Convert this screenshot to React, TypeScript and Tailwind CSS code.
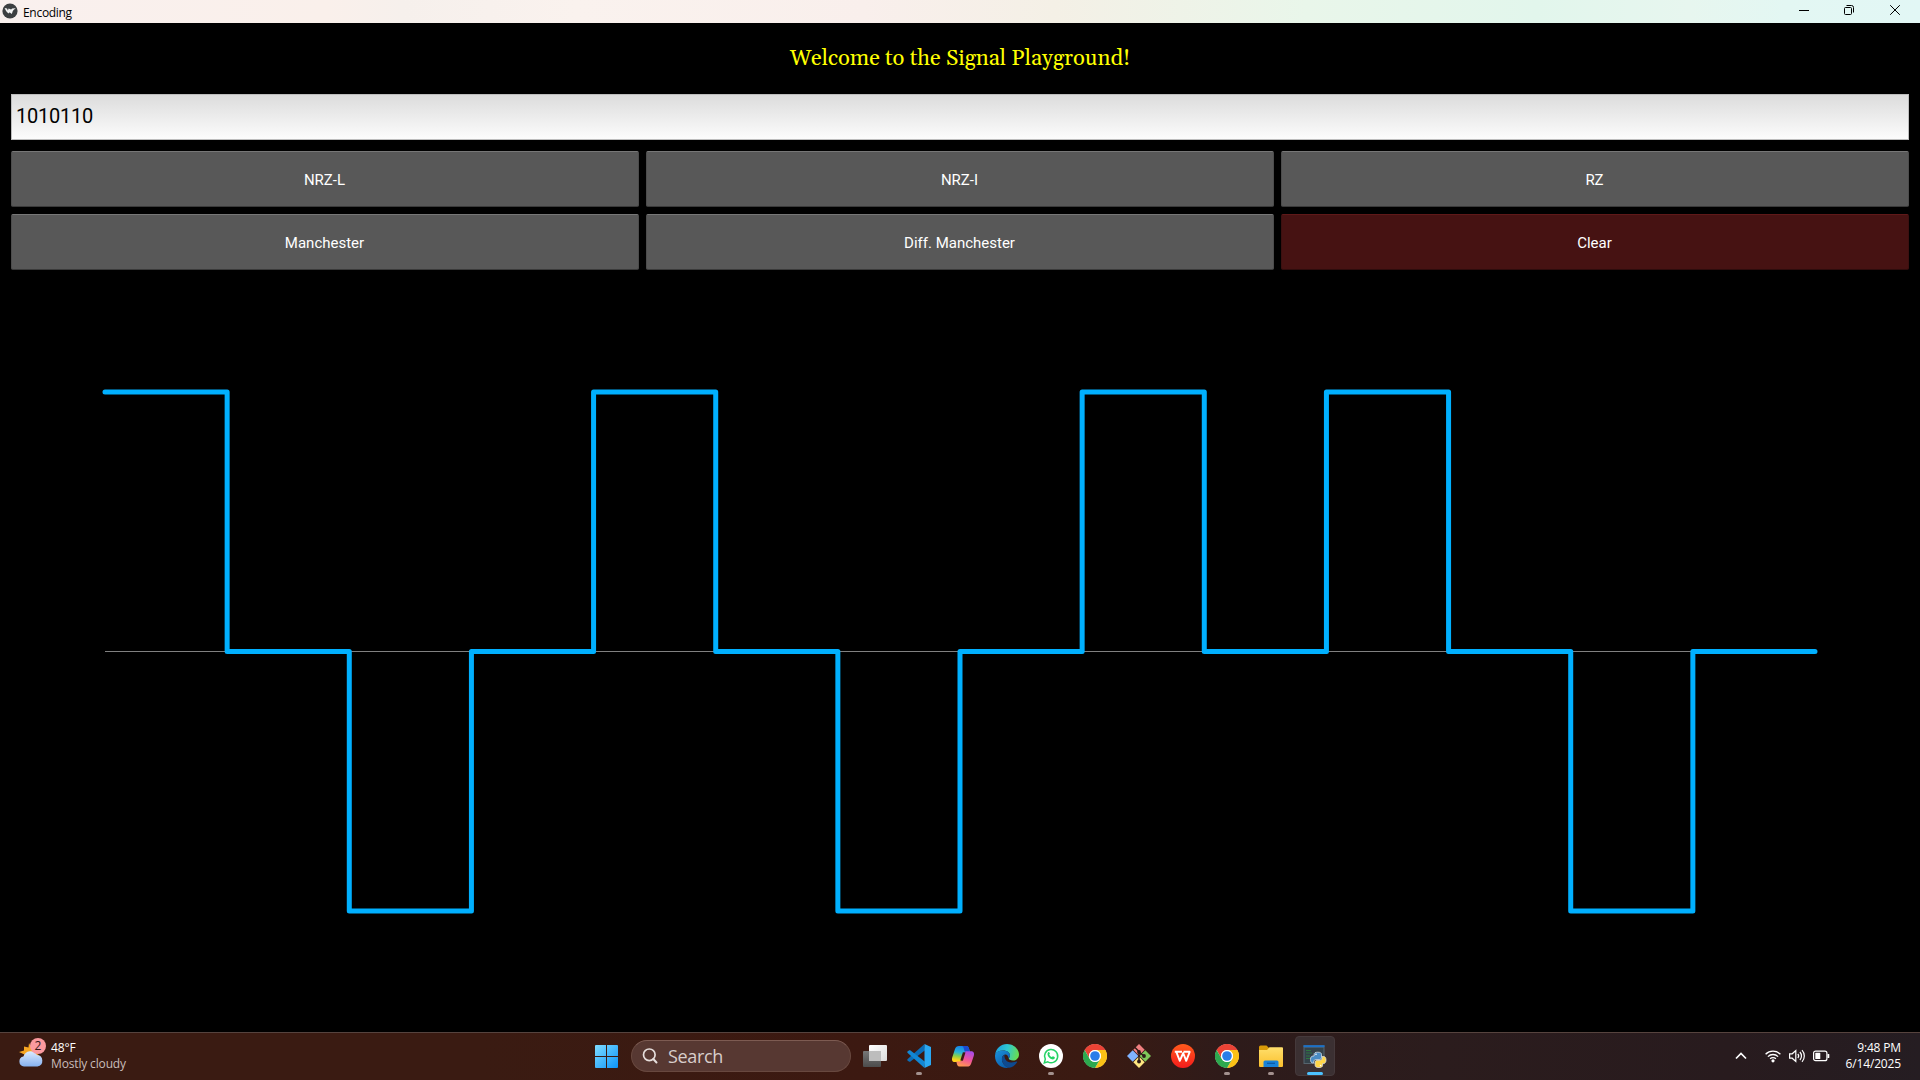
import type { ReactNode } from 'react';

/* ---------- Title bar ---------- */

function TitleBar() {
  return (
    <header className="flex h-[23px] shrink-0 items-center bg-[linear-gradient(90deg,#f9f0ee_0%,#faf0eb_17%,#f6f0ec_21%,#faf2ee_30%,#f9efec_45%,#f4f0e6_55%,#e9f6ea_68%,#e2f6ec_80%,#e7f6ef_88%,#e3f7f3_93%,#e2f7f5_100%)] pl-[2px] text-black">
      <svg width="16" height="16" viewBox="0 0 16 16" className="-mt-px">
        <circle cx="8" cy="8" r="7.6" fill="#3c3f41" />
        <path d="M2.600 5 5 5.600l.9 2 .7-2.200 2.500 1 1-.8 3.700-.3-2 1.400-1 1.200-1 3.200-2.300-1.800-.6 1.100-1.900-1.200-1.300-1.900z" fill="#f4f4f4" />
      </svg>
      <span className="ml-[5px] mt-[2px] font-['Segoe_UI','Open_Sans',sans-serif] text-[12px] leading-4 tracking-[-0.3px]">Encoding</span>
      <div className="ml-auto -mt-[3px] flex items-center pr-[20px]">
        <svg width="10" height="10" viewBox="0 0 10 10" className="mr-[35px]">
          <path d="M0 5.5h10" stroke="#000" />
        </svg>
        <svg width="10" height="10" viewBox="0 0 10 10" className="mr-[36px]" fill="none" stroke="#000">
          <rect x=".5" y="2.5" width="7" height="7" rx="1" />
          <path d="M2.5.5h5a2 2 0 0 1 2 2v5" />
        </svg>
        <svg width="10" height="10" viewBox="0 0 10 10" stroke="#000">
          <path d="M.2.2l9.6 9.6M9.8.2L.2 9.8" />
        </svg>
      </div>
    </header>
  );
}

/* ---------- Encoder controls ---------- */

const encodings = ['NRZ-L', 'NRZ-I', 'RZ', 'Manchester', 'Diff. Manchester'];

function Controls() {
  return (
    <div className="grid grid-cols-3 gap-[7px] font-[Roboto,sans-serif] text-[15px] text-white">
      {encodings.map((name) => (
        <button
          key={name}
          className="h-[56px] rounded-[2px] border border-t-[#777] border-r-[#4c4c4c] border-b-[#3a3a3a] border-l-[#4c4c4c] bg-[#585858] pt-[2px] pr-px"
        >
          {name}
        </button>
      ))}
      <button className="h-[56px] rounded-[2px] border border-t-[#5f1919] border-r-[#3c1010] border-b-[#2e0c0c] border-l-[#3c1010] bg-[#461212] pt-[2px] pr-px">
        Clear
      </button>
    </div>
  );
}

/* ---------- Signal plot ---------- */

const levels = [1, 0, -1, 0, 1, 0, -1, 0, 1, 0, 1, 0, -1, 0];

function SignalPlot() {
  const x0 = 105;
  const step = 1710 / levels.length;
  const mid = 381.5;
  const points = levels
    .flatMap((v, i) => {
      const y = mid - v * 259.5;
      return [`${x0 + i * step},${y}`, `${x0 + (i + 1) * step},${y}`];
    })
    .join(' ');
  return (
    <svg className="block w-full flex-1" viewBox="0 0 1920 762" fill="none">
      <path d="M105 381.5H1815" stroke="#808080" />
      <polyline points={points} stroke="#00b0ff" strokeWidth="5" strokeLinecap="round" strokeLinejoin="round" />
    </svg>
  );
}

/* ---------- Taskbar icons ---------- */

function StartIcon() {
  return (
    <svg width="23" height="23" viewBox="0 0 23 23">
      <defs>
        <linearGradient id="win" x1="0" y1="0" x2="1" y2="1">
          <stop offset="0" stopColor="#7fdcff" />
          <stop offset="1" stopColor="#0c93f8" />
        </linearGradient>
      </defs>
      <path d="M1 0h10v11H0V1q0-1 1-1zM12 0h10q1 0 1 1v10H12zM0 12h11v11H1q-1 0-1-1zM12 12h11v10q0 1-1 1H12z" fill="url(#win)" />
    </svg>
  );
}

function TaskViewIcon() {
  return (
    <svg width="24" height="24" viewBox="0 0 24 24">
      <defs>
        <linearGradient id="tvf" x1="0" y1="0" x2="1" y2="1">
          <stop offset="0" stopColor="#fff" />
          <stop offset="1" stopColor="#dcdcdc" />
        </linearGradient>
        <linearGradient id="tvb" x1="0" y1="0" x2="0" y2="1">
          <stop offset="0" stopColor="#777" />
          <stop offset="1" stopColor="#4c4c4c" />
        </linearGradient>
      </defs>
      <rect x="0" y="7" width="18" height="16" rx="1" fill="url(#tvb)" />
      <rect x="6" y="1" width="18" height="16" rx="1" fill="url(#tvf)" />
      <path d="M6 7h12v10H6z" fill="#bdbdbd" />
    </svg>
  );
}

function VSCodeIcon() {
  return (
    <svg width="24" height="24" viewBox="0 0 24 24">
      <path d="M.4 15.200 17.200.2l.8 6.100L3.200 17.800l-.9-.1L.4 16.400z" fill="#0a6db8" />
      <path d="M.4 8.800 17.200 23.800l.8-6.100L3.200 6.200l-.9.1L.4 7.600z" fill="#1287d4" />
      <path d="M17.500 0 24 3v18l-6.500 3z" fill="#2aa8f2" />
    </svg>
  );
}

function CopilotIcon() {
  return (
    <svg width="24" height="24" viewBox="0 0 24 24">
      <defs>
        <linearGradient id="cpa" x1=".5" y1="0" x2=".3" y2="1">
          <stop offset="0" stopColor="#1580e8" />
          <stop offset=".4" stopColor="#28b4d8" />
          <stop offset=".65" stopColor="#8bd04a" />
          <stop offset=".9" stopColor="#ffd21a" />
        </linearGradient>
        <linearGradient id="cpb" x1=".7" y1="0" x2=".3" y2="1">
          <stop offset="0" stopColor="#a74be8" />
          <stop offset=".5" stopColor="#f0539a" />
          <stop offset="1" stopColor="#ff9a4d" />
        </linearGradient>
      </defs>
      <path d="M8 2h7.200c1.500 0 2.300.8 2.700 2.200L19 8h-3.500c-1.700 0-2.400.8-2.800 2.200l-1.900 6.100C10.300 18 9.500 18 8 18H3.500C1 18 .6 15.500 1.300 13.200L4 5c.7-2 1.900-3 4-3z" fill="url(#cpa)" />
      <path d="M12 2h3.200c1.500 0 2.300.8 2.700 2.200L19 8h-3.500c-1.300 0-2-.8-2.300-2.100L12.600 3.800C12.400 3 12 2.300 11 2z" fill="#1b49d0" />
      <path d="M16 22.500H9c-1.700 0-2.600-.8-3-2.300L5.300 17.500H8.500c1.700 0 2.500-.8 2.900-2.300l1.800-6c.5-1.600 1.200-2 2.700-2h4.400c2.500 0 3.200 2.200 2.500 4.500l-2.700 8c-.7 2-2 2.800-4.100 2.800z" fill="url(#cpb)" />
      <path d="m9.300 16.500 2.600-8.300 2.600.3-2.600 8.300z" fill="#3a1a14" />
    </svg>
  );
}

function EdgeIcon() {
  return (
    <svg width="24" height="24" viewBox="0 0 24 24">
      <defs>
        <linearGradient id="edt" x1="0" y1=".3" x2="1" y2=".5">
          <stop offset="0" stopColor="#1ba0e0" />
          <stop offset=".5" stopColor="#2fc8d0" />
          <stop offset="1" stopColor="#6ade4e" />
        </linearGradient>
        <linearGradient id="edb" x1="0" y1="0" x2=".7" y2="1">
          <stop offset="0" stopColor="#1b92dc" />
          <stop offset="1" stopColor="#0b5cab" />
        </linearGradient>
      </defs>
      <path d="M.2 10.400C1 4.500 5.800 0 12 0c7 0 12 5.300 12 10.500 0 3.700-2.800 6-6 6-2.600 0-4.200-.9-4.200-1.900 0-.8 1.200-1.200 1.200-3.300C15 8.700 12 6.400 8.300 6.400 4.500 6.400 1.500 8 .2 10.400z" fill="url(#edt)" />
      <path d="M0 12C0 8.500 3.200 6.400 8.300 6.400c4 0 6.700 2.300 6.700 4.900 0 2.100-1.200 2.500-1.200 3.300 0 0-1-5-4.300-3.800-2.200.8-3.300 3.700-2 7.200 1 2.800 3.600 5.200 6.500 5.800C6 25 0 19.500 0 12z" fill="url(#edb)" />
      <path d="M7.500 18c-1.300-3.500-.2-6.400 2-7.200-.6 3.200 1.700 7.800 6.700 7.800 2.800 0 4.500-1 5.500-1 .5 0 .6.500.2 1C20 21.800 16.600 24 14 23.800 11.200 23.500 8.500 20.800 7.500 18z" fill="#0e4a90" />
    </svg>
  );
}

function WhatsAppIcon() {
  return (
    <svg width="24" height="24" viewBox="0 0 24 24">
      <circle cx="12" cy="12" r="12" fill="#fff" />
      <path d="m5.300 18.900 1-3.700a6.600 6.600 0 1 1 2.500 2.600z" fill="none" stroke="#25d366" strokeWidth="1.500" />
      <path d="M9.300 8.100c.5-.4.9-.2 1.100.3l.5 1.200c.1.400-.5.800-.6 1.100.6 1.200 1.500 1.900 2.600 2.400.4-.1.700-.9 1.100-.8l1.600.7c.5.300.1 1.700-.5 2.100-1.200.8-3.200.1-4.800-1.300-1.600-1.500-2.600-3.900-1-5.700z" fill="#25d366" />
    </svg>
  );
}

function ChromeIcon() {
  return (
    <svg width="24" height="24" viewBox="0 0 24 24">
      <circle cx="12" cy="12" r="11.800" fill="#fff" />
      <path d="M1.600 6A12 12 0 0 1 22.400 6H12a6 6 0 0 0-5.200 9z" fill="#ea4335" />
      <path d="M22.400 6A12 12 0 0 1 12 24l5.200-9A6 6 0 0 0 12 6z" fill="#fbc116" />
      <path d="M12 24A12 12 0 0 1 1.600 6l5.200 9a6 6 0 0 0 10.400 0z" fill="#2da94f" />
      <circle cx="12" cy="12" r="6" fill="#fff" />
      <circle cx="12" cy="12" r="4.800" fill="#2a7de9" />
    </svg>
  );
}

function GitIcon() {
  return (
    <svg width="24" height="24" viewBox="0 0 24 24">
      <path d="m12 0 5.700 5.700L12 11.400 6.300 5.700z" fill="#f08080" />
      <path d="m5.700 6.300 5.700 5.700-5.700 5.700L0 12z" fill="#80b3ff" />
      <path d="m18.300 6.300L24 12l-5.700 5.700-5.700-5.700z" fill="#7fc75a" />
      <path d="m12 12.600 5.700 5.700L12 24l-5.700-5.700z" fill="#ffe680" />
      <path d="M8 3.500 12 7.500V18M12 8l5 4" fill="none" stroke="#2b1917" strokeWidth="1.500" />
      <circle cx="12" cy="8" r="1.900" fill="#2b1917" />
      <circle cx="12" cy="17.500" r="1.900" fill="#2b1917" />
      <circle cx="17" cy="12" r="1.900" fill="#2b1917" />
    </svg>
  );
}

function WpsIcon() {
  return (
    <svg width="24" height="24" viewBox="0 0 24 24">
      <defs>
        <linearGradient id="wps" x1="0" y1="0" x2="0" y2="1">
          <stop offset="0" stopColor="#ff5a1c" />
          <stop offset="1" stopColor="#f51c1c" />
        </linearGradient>
      </defs>
      <circle cx="12" cy="12" r="12" fill="url(#wps)" />
      <path d="M3.800 7.800H11M5.300 7.800l3.500 9 3.400-7.800 3 7.800 3.500-9H12.500" fill="none" stroke="#fff" strokeWidth="1.900" strokeLinejoin="round" />
    </svg>
  );
}

function ExplorerIcon() {
  return (
    <svg width="24" height="24" viewBox="0 0 24 24">
      <defs>
        <linearGradient id="fld" x1="0" y1="0" x2="0" y2="1">
          <stop offset="0" stopColor="#ffdf6c" />
          <stop offset="1" stopColor="#fbc02d" />
        </linearGradient>
      </defs>
      <path d="M0 3q0-1.500 1.500-1.500h6L10 4v4H0z" fill="#d99a08" />
      <path d="M0 6h8l2.500-2.700H23q1 0 1 1V22q0 1-1 1H1q-1 0-1-1z" fill="url(#fld)" />
      <path d="M4.500 23v-5q0-1.500 1.500-1.500h12q1.500 0 1.500 1.500v5z" fill="#1882d8" />
      <path d="M8 19.300h8" stroke="#0b58a4" strokeWidth="1.200" />
    </svg>
  );
}

function PythonIcon() {
  return (
    <svg width="24" height="24" viewBox="0 0 24 24">
      <path d="M.5 1.200h21V20H.5z" fill="#56646e" />
      <path d="M.5 1.200h21v2H.5z" fill="#1a70c8" />
      <path d="M1.500 3.700h19V19h-19z" fill="#34424a" />
      <path d="M3 6.500h5M3 9h6M3 12h4M3 14.500h5" stroke="#2f7540" strokeWidth="1.200" />
      <g stroke="#e9eef2" strokeWidth=".7">
        <path d="M14.800 8.200c2.500 0 3.700.8 3.700 2.200v3c0 1.400-1 2.200-2.300 2.200H13c-1.500 0-2.300.9-2.300 2.300V19H9.600c-1.500 0-2.100-1.600-2.100-3.600s.8-3.400 2.600-3.400h1v-1.600c0-1.500 1.200-2.200 3.700-2.200z" fill="#4a8cc4" />
        <path d="M16 23.600c-2.500 0-3.900-.8-3.900-2.300v-2.800c0-1.300.9-2.200 2.300-2.200h2.400c1.600 0 2.400-1 2.400-2.400v-1.400h1.500c1.500 0 2.300 1.500 2.300 3.600 0 2-.9 3.500-2.500 3.500h-.9v1.700c0 1.500-1.200 2.300-3.600 2.300z" fill="#ffd648" />
      </g>
      <circle cx="13" cy="10.300" r=".8" fill="#fff" />
      <circle cx="17.600" cy="21.500" r=".8" fill="#fff" />
    </svg>
  );
}

/* ---------- Taskbar ---------- */

function Slot({ children, running, active }: { children: ReactNode; running?: boolean; active?: boolean }) {
  return (
    <div className="flex h-full w-[44px] shrink-0 items-center justify-center">
      <div
        className={
          active
            ? 'relative flex h-[40px] w-[40px] items-center justify-center rounded-[4px] border border-[#45393b] bg-[#3b3032]'
            : 'relative flex h-[40px] w-[40px] items-center justify-center'
        }
      >
        {children}
        {running && <span className="absolute bottom-px left-[17px] h-[3px] w-[6px] rounded-full bg-[#a3918e]" />}
        {active && <span className="absolute bottom-0 left-[11px] h-[3px] w-[16px] rounded-full bg-[#4cc2ff]" />}
      </div>
    </div>
  );
}

function Taskbar() {
  return (
    <footer className="flex h-[48px] shrink-0 items-center border-t border-[#56433e] bg-[linear-gradient(90deg,#3a1b12_0%,#3a1b12_25%,#3c1911_45%,#3a1a12_57%,#2e1b1a_64%,#2b1c1d_75%,#281b1e_90%,#251d22_100%)] pb-px font-['Segoe_UI','Open_Sans',sans-serif]">
      <div className="flex w-[584px] items-center pl-[18px]">
        <div className="relative -mt-[4px] h-[32px] w-[28px]">
          <svg width="28" height="32" viewBox="0 0 28 32">
            <defs>
              <linearGradient id="cld" x1="0" y1="0" x2="0" y2="1">
                <stop offset="0" stopColor="#dcebff" />
                <stop offset="1" stopColor="#86b2f0" />
              </linearGradient>
            </defs>
            <path d="m11 5 2.500 5 8 8-14 2-2-1.500 1-2-5.500-2.500 5-1.500V8.500l4.500 1z" fill="#f5a623" />
            <path d="M6 28.500a5 5 0 0 1-.5-9.900A7.300 7.300 0 0 1 19 17 5.800 5.800 0 0 1 19.500 28.500z" fill="url(#cld)" />
          </svg>
          <span className="absolute left-[12px] top-0 flex h-[16px] w-[16px] items-center justify-center rounded-full bg-[#fb9a9f] text-[12px] leading-4 text-[#33181a]">
            2
          </span>
        </div>
        <div className="-mt-px ml-[5px] text-[12px] leading-4">
          <div className="font-medium tracking-[-0.15px] text-white">48°F</div>
          <div className="tracking-[-0.15px] text-[#c9bdba]">Mostly cloudy</div>
        </div>
      </div>
      <Slot>
        <StartIcon />
      </Slot>
      <div className="ml-[3px] mr-[2px] flex h-[32px] w-[220px] items-center rounded-full border border-[#68483f] border-t-[#7d5b52] bg-[#573832] pl-[10px]">
        <svg width="16" height="16" viewBox="0 0 16 16" fill="none" stroke="#e6dedc" strokeWidth="1.700" className="-mt-px">
          <circle cx="7.300" cy="6.800" r="5.800" />
          <path d="m11.300 11 3.200 3.500" strokeWidth="2" strokeLinecap="round" />
        </svg>
        <span className="-mt-px ml-[10px] text-[18px] leading-6 tracking-[-0.35px] text-[#d8cecb]">Search</span>
      </div>
      <Slot>
        <TaskViewIcon />
      </Slot>
      <Slot running>
        <VSCodeIcon />
      </Slot>
      <Slot>
        <CopilotIcon />
      </Slot>
      <Slot>
        <EdgeIcon />
      </Slot>
      <Slot running>
        <WhatsAppIcon />
      </Slot>
      <Slot>
        <ChromeIcon />
      </Slot>
      <Slot>
        <GitIcon />
      </Slot>
      <Slot>
        <WpsIcon />
      </Slot>
      <Slot running>
        <ChromeIcon />
      </Slot>
      <Slot running>
        <ExplorerIcon />
      </Slot>
      <Slot active>
        <PythonIcon />
      </Slot>
      <div className="ml-auto flex items-center pr-[19px] text-white">
        <svg width="12" height="8" viewBox="0 0 12 8" fill="none" stroke="#fff" strokeWidth="1.700" className="mr-[18px]">
          <path d="m1 6.500 5-5 5 5" />
        </svg>
        <svg width="16" height="14" viewBox="0 0 16 14" fill="none" stroke="#fff" strokeWidth="1.300" className="mr-[8px]">
          <path d="M.6 5.300a10.400 10.400 0 0 1 14.800 0M2.900 7.600a7.200 7.200 0 0 1 10.200 0M5.100 9.800a4.100 4.100 0 0 1 5.800 0" />
          <circle cx="8" cy="11.800" r="1.600" fill="#fff" stroke="none" />
        </svg>
        <svg width="17" height="14" viewBox="0 0 17 14" fill="none" stroke="#fff" strokeWidth="1.200" className="mr-[7px]">
          <path d="M.6 4.800h2.600L6.800 1.500v11L3.200 9.200H.6zM8.800 5a3 3 0 0 1 0 4M10.900 3a5.900 5.900 0 0 1 0 8M13 1.100a8.700 8.700 0 0 1 0 11.800" />
        </svg>
        <svg width="17" height="12" viewBox="0 0 17 12" className="mr-[16px]">
          <rect x=".6" y="1.100" width="13.300" height="9.600" rx="2" fill="none" stroke="#fff" strokeWidth="1.200" />
          <path d="M14.500 4h1.200q.6 0 .6.600v2.800q0 .6-.6.600h-1.200z" fill="#fff" />
          <rect x="2.300" y="2.800" width="5" height="6.200" rx=".6" fill="#fff" />
        </svg>
        <div className="-mt-px text-right text-[12px] leading-4 tracking-[-0.15px]">
          <div>9:48 PM</div>
          <div>6/14/2025</div>
        </div>
      </div>
    </footer>
  );
}

export default function App() {
  return (
    <div className="flex h-[1080px] w-[1920px] flex-col overflow-hidden bg-black">
      <TitleBar />
      <main className="flex min-h-0 flex-1 flex-col">
        <h1 className="flex h-[71px] shrink-0 items-center justify-center pt-px font-[Georgia,Gelasio,'Liberation_Serif',serif] text-[22px] tracking-[-0.03px] text-[#ffff00]">
          Welcome to the Signal Playground!
        </h1>
        <div className="shrink-0 px-[11px]">
          <input
            readOnly
            value="1010110"
            className="mb-[11px] block h-[46px] w-full border border-[#bdbdbd] bg-[linear-gradient(180deg,#dcdcdc,#fcfcfc)] pb-[3px] pl-[4px] font-[Roboto,sans-serif] text-[20px] tracking-[-0.25px] text-black outline-none"
          />
          <Controls />
        </div>
        <SignalPlot />
      </main>
      <Taskbar />
    </div>
  );
}
